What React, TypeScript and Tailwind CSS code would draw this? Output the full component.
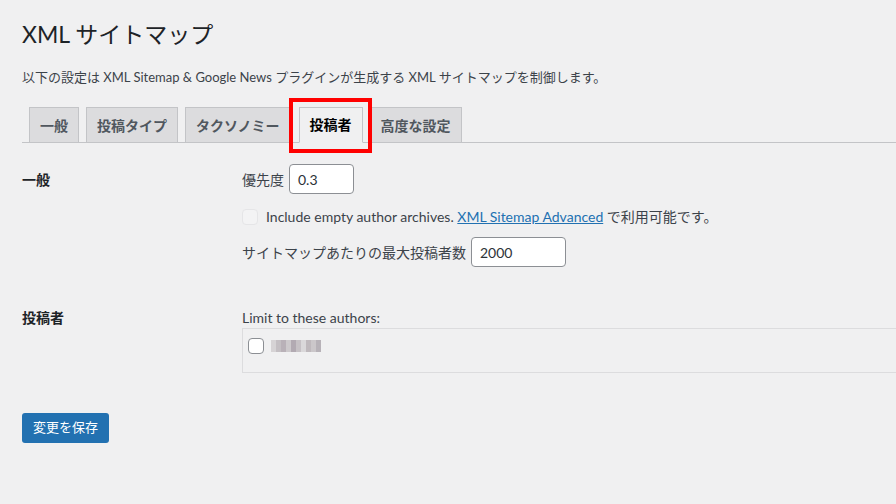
import React from "react";

const tabs = [
  { label: "一般", active: false },
  { label: "投稿タイプ", active: false },
  { label: "タクソノミー", active: false },
  { label: "投稿者", active: true },
  { label: "高度な設定", active: false },
];

// mosaic blocks standing in for the redacted author name
const mosaic = [
  "#d6d3d5", "#c4bfc3", "#b9b1b8", "#cdc9cc", "#b2aab2", "#c6c1c5",
  "#dad8da", "#bfb9bd", "#cbc7ca", "#b7b2b8",
];

export default function App() {
  return (
    <div className="w-[896px] h-[504px] overflow-hidden bg-[#f0f0f1] text-[#3c434a] font-['Lato','Noto_Sans_CJK_JP',sans-serif]">
      <div className="pl-[22px] pt-[19px]">
        <h1 className="text-[23px] leading-[30px] font-normal text-[#1d2327]">
          XML サイトマップ
        </h1>
        <p className="mt-[18px] text-[13px] leading-[20px]">
          以下の設定は XML Sitemap &amp; Google News プラグインが生成する XML サイトマップを制御します。
        </p>

        <div className="mt-[20px] flex h-[36px] border-b border-[#c3c4c7]">
          {tabs.map((t) => (
            <div
              key={t.label}
              className={
                t.active
                  ? "relative ml-[8px] mb-[-1px] flex h-[36px] items-center border border-[#c3c4c7] border-b-[#f0f0f1] bg-[#f0f0f1] px-[10px] pb-px text-[14px] font-semibold text-black"
                  : "ml-[7px] flex h-[35px] items-center border border-b-0 border-[#c3c4c7] bg-[#dcdcde] px-[10px] text-[14px] font-semibold text-[#50575e]"
              }
            >
              {t.label}
              {t.active && (
                <div className="pointer-events-none absolute left-[-11px] top-[-10px] h-[55px] w-[83px] border-4 border-[#ff0000]" />
              )}
            </div>
          ))}
        </div>

        <div className="mt-[21px] flex">
          <div className="w-[220px] shrink-0 pt-[6px] text-[14px] leading-[20px] font-semibold text-[#1d2327]">
            一般
          </div>
          <div className="flex flex-col">
            <div className="flex items-center gap-[5px] text-[14px]">
              <span>優先度</span>
              <div className="flex h-[30px] w-[65px] items-center rounded-[4px] border border-[#8c8f94] bg-white px-[8px] text-[14px] text-[#2c3338]">
                0.3
              </div>
            </div>
            <div className="mt-[13px] flex items-center text-[14px] leading-[20px]">
              <span className="mr-[8px] h-[16px] w-[16px] rounded-[4px] border border-[#e5e5e7] bg-[#f3f3f4]" />
              <span>Include empty author archives.&nbsp;</span>
              <span className="text-[#2271b1] underline">XML Sitemap Advanced</span>
              <span>&nbsp;で利用可能です。</span>
            </div>
            <div className="mt-[10px] flex items-center gap-[5px] text-[14px]">
              <span>サイトマップあたりの最大投稿者数</span>
              <div className="flex h-[30px] w-[95px] items-center rounded-[4px] border border-[#8c8f94] bg-white px-[8px] text-[14px] text-[#2c3338]">
                2000
              </div>
            </div>
          </div>
        </div>

        <div className="mt-[41px] flex">
          <div className="w-[220px] shrink-0 text-[14px] leading-[20px] font-semibold text-[#1d2327]">
            投稿者
          </div>
          <div className="flex flex-col">
            <div className="text-[14px] leading-[20px]">Limit to these authors:</div>
            <div className="flex h-[45px] w-[700px] items-start border border-[#dcdcde] pl-[5px] pt-[9px]">
              <span className="h-[16px] w-[16px] rounded-[4px] border border-[#8c8f94] bg-white" />
              <div className="ml-[7px] mt-[2px] flex">
                {mosaic.map((c, i) => (
                  <span key={i} className="h-[12px] w-[5px]" style={{ backgroundColor: c }} />
                ))}
              </div>
            </div>
          </div>
        </div>

        <button className="mt-[40px] flex h-[30px] w-[87px] items-center justify-center rounded-[3px] bg-[#2271b1] text-[13px] text-white">
          変更を保存
        </button>
      </div>
    </div>
  );
}
